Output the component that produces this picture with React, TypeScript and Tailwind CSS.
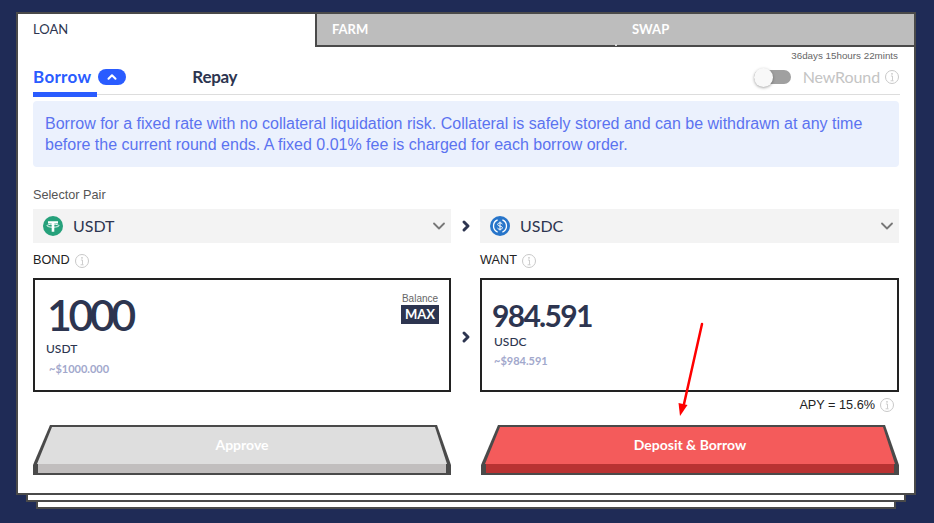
import { ChevronDown, ChevronRight, ChevronUp } from 'lucide-react';

const HEADING = "font-['Lato',sans-serif]";

const InfoIcon = () => (
    <svg width="14" height="14" viewBox="0 0 14 14" className="shrink-0">
        <circle cx="7" cy="7" r="6.5" fill="none" stroke="#c8c8c8" strokeWidth="1" />
        <circle cx="7" cy="3.8" r="0.9" fill="#c8c8c8" />
        <path d="M5.9 6h1.6v4.6M5.6 10.8h3" fill="none" stroke="#c8c8c8" strokeWidth="0.9" />
    </svg>
);

const UsdtLogo = () => (
    <svg width="20" height="20" viewBox="0 0 20 20" className="shrink-0">
        <circle cx="10" cy="10" r="10" fill="#26a17b" />
        <path d="M5 5.2h10v2.3h-3.7v8.3H8.7V7.5H5z" fill="#fff" />
        <ellipse cx="10" cy="9.7" rx="6" ry="1.5" fill="none" stroke="#fff" strokeWidth="0.9" />
    </svg>
);

const UsdcLogo = () => (
    <svg width="20" height="20" viewBox="0 0 20 20" className="shrink-0">
        <circle cx="10" cy="10" r="10" fill="#2775ca" />
        <path d="M7.6 3.9a6.6 6.6 0 0 0 0 12.2M12.4 3.9a6.6 6.6 0 0 1 0 12.2" fill="none" stroke="#fff" strokeWidth="1.3" />
        <path d="M12.3 8.3c-.3-1-1.2-1.4-2.3-1.4-1.3 0-2.3.6-2.3 1.6 0 2.3 4.7 1 4.7 3.2 0 1-1 1.6-2.4 1.6-1.2 0-2.2-.5-2.5-1.5M10 5.6v8.8" fill="none" stroke="#fff" strokeWidth="1" />
    </svg>
);

const Separator = ({ className = '' }: { className?: string }) => (
    <div className={`w-[29px] flex justify-center ${className}`}>
        <ChevronRight size={16} strokeWidth={4.5} className="text-[#2d3550]" />
    </div>
);

const PairSelect = ({ logo, symbol, width }: { logo: React.ReactNode; symbol: string; width: string }) => (
    <div className={`${width} h-[34px] bg-[#f3f3f3] flex items-center pl-[10px] pr-[2px]`}>
        {logo}
        <span className={`ml-[10px] text-[16px] text-[#2d3550] ${HEADING}`}>{symbol}</span>
        <ChevronDown size={20} strokeWidth={2.2} className="ml-auto text-[#777]" />
    </div>
);

const ActionButton = ({ label, face, front }: { label: string; face: string; front: string }) => (
    <button className="relative w-[418px] h-[50px] flex justify-center">
        <svg viewBox="0 0 418 50" width="418" height="50" className="absolute inset-0">
            <path d="M17 0H404L418 40V50H0V40Z" fill="#4a4a4a" />
            <path d="M19 2H402L414 39H4Z" fill={face} />
            <rect x="5" y="39" width="408" height="9" fill={front} />
        </svg>
        <span className={`relative mt-[11px] text-[14px] leading-[18px] font-bold text-white ${HEADING}`}>{label}</span>
    </button>
);

export default function App() {
    return (
        <div className="w-[934px] h-[523px] bg-[#1f2b56] pt-[12px] pl-[16px] overflow-hidden font-['Liberation_Sans',sans-serif]">
            <div className="relative w-[900px] h-[483px] bg-white border-2 border-[#4a4a4a]">
                {/* tabs */}
                <div className={`flex w-full h-[33px] text-[13px] leading-[18px] ${HEADING}`}>
                    <div className="w-[297px] pl-[15px] pt-[6px] bg-white text-[#2d3550]">LOAN</div>
                    <div className="w-[300px] pl-[15px] pt-[6px] bg-[#bdbdbd] text-white font-bold border-l-2 border-b-2 border-[#4a4a4a]">FARM</div>
                    <div className="relative flex-1 pl-[17px] pt-[6px] bg-[#bdbdbd] text-white font-bold border-b-2 border-[#4a4a4a]">
                        SWAP
                        <div className="absolute left-0 bottom-[-1px] w-[2px] h-[2px] bg-[#d8d8d8]" />
                    </div>
                </div>

                <div className="px-[15px]">
                    <div className="text-right text-[9.8px] leading-[12px] text-[#666] pt-[3px] pr-[1px]">36days 15hours 22mints</div>

                    {/* borrow / repay row */}
                    <div className="relative h-[33px] pb-[2px] flex items-center border-b border-[#ddd] w-[867px]">
                        <span className={`text-[17px] font-bold tracking-[0.3px] text-[#2a5cff] ${HEADING}`}>Borrow</span>
                        <span className="ml-[7px] w-[28px] h-[16px] rounded-full bg-[#2a5cff] flex items-center justify-center">
                            <ChevronUp size={14} strokeWidth={3.5} className="text-white" />
                        </span>
                        <span className={`ml-[66px] text-[17px] font-bold tracking-[-0.3px] text-[#2d3550] ${HEADING}`}>Repay</span>
                        <div className="absolute left-0 bottom-[-3px] w-[64px] h-[5px] bg-[#2a5cff]" />

                        <div className="ml-auto flex items-center pr-[1px]">
                            <div className="relative w-[37px] h-[14px] rounded-full bg-[#a0a0a0] mr-[12px]">
                                <div className="absolute left-0 top-[-2px] w-[19px] h-[19px] rounded-full bg-[#f8f8f8] shadow-[0_1px_3px_rgba(0,0,0,0.35)]" />
                            </div>
                            <span className={`text-[16px] tracking-[-0.1px] text-[#c4c4c4] ${HEADING}`}>NewRound</span>
                            <span className="ml-[5px]"><InfoIcon /></span>
                        </div>
                    </div>

                    {/* notice */}
                    <div className="mt-[6px] h-[66px] w-[866px] rounded-[4px] bg-[#ebf1fd] px-[12px] py-[12px] text-[16px] leading-[21px] text-[#5b73f0]">
                        Borrow for a fixed rate with no collateral liquidation risk. Collateral is safely stored and can be withdrawn at any time before the current round ends. A fixed 0.01% fee is charged for each borrow order.
                    </div>

                    <div className="mt-[20px] text-[12.7px] leading-[16px] text-[#555]">Selector Pair</div>

                    <div className="mt-[6px] flex w-[866px] items-center">
                        <PairSelect logo={<UsdtLogo />} symbol="USDT" width="w-[418px]" />
                        <Separator />
                        <PairSelect logo={<UsdcLogo />} symbol="USDC" width="w-[419px]" />
                    </div>

                    <div className="mt-[8px] flex w-[866px] text-[12.7px] leading-[18px] text-[#222]">
                        <div className="w-[447px] flex items-center">BOND<span className="ml-[5px] mt-[1px]"><InfoIcon /></span></div>
                        <div className="flex items-center">WANT<span className="ml-[5px] mt-[1px]"><InfoIcon /></span></div>
                    </div>

                    {/* amounts */}
                    <div className="mt-[9px] flex w-[866px] items-center">
                        <div className="relative w-[418px] h-[114px] border-2 border-[#222] pl-[11px] pt-[11px]">
                            <div className={`ml-[1px] text-[43px] leading-[48px] font-semibold tracking-[-3.5px] text-[#2d3550] ${HEADING}`}>1000</div>
                            <div className={`mt-[2px] text-[12px] leading-[16px] font-medium text-[#2d3550] ${HEADING}`}>USDT</div>
                            <div className={`mt-[4px] ml-[3px] text-[11px] leading-[16px] font-bold text-[#a2a8cc] ${HEADING}`}>~$1000.000</div>
                            <div className="absolute right-[10px] top-[12px] flex flex-col items-center">
                                <span className="text-[10px] leading-[13px] text-[#666]">Balance</span>
                                <span className={`w-[38px] h-[19px] bg-[#2d3550] text-white text-[13px] leading-[19px] text-center font-bold ${HEADING}`}>MAX</span>
                            </div>
                        </div>
                        <Separator className="mt-[4px]" />
                        <div className="w-[419px] h-[114px] border-2 border-[#222] pl-[10px] pt-[17px]">
                            <div className={`text-[30px] leading-[36px] font-bold tracking-[-1.7px] text-[#2d3550] ${HEADING}`}>984.591</div>
                            <div className={`mt-[1px] ml-[2px] text-[12px] leading-[16px] font-medium text-[#2d3550] ${HEADING}`}>USDC</div>
                            <div className={`mt-[3px] ml-[2px] text-[11px] leading-[16px] font-bold text-[#a2a8cc] ${HEADING}`}>~$984.591</div>
                        </div>
                    </div>

                    <div className="mt-[5px] w-[861px] flex justify-end items-center text-[12.7px] leading-[16px] text-[#222]">
                        APY = 15.6%<span className="ml-[5px] -mt-[1px]"><InfoIcon /></span>
                    </div>

                    <div className="mt-[12px] flex w-[866px] gap-[30px]">
                        <ActionButton label="Approve" face="#dedede" front="#c1bebe" />
                        <ActionButton label="Deposit & Borrow" face="#f45b5b" front="#b93232" />
                    </div>
                </div>

                {/* annotation arrow */}
                <svg width="40" height="100" viewBox="0 0 40 100" className="absolute left-[650px] top-[308px]">
                    <path d="M34 2L16 82" stroke="#ff0000" strokeWidth="2.5" strokeLinecap="round" fill="none" />
                    <path d="M12 94L10.5 81L19.5 83Z" fill="#ff0000" />
                </svg>
            </div>

            {/* stacked sheets */}
            <div className="ml-[10px] w-[880px] h-[7px] bg-white border-2 border-t-0 border-[#4a4a4a]" />
            <div className="ml-[20px] w-[860px] h-[7px] bg-white border-2 border-t-0 border-[#4a4a4a]" />
        </div>
    );
}
